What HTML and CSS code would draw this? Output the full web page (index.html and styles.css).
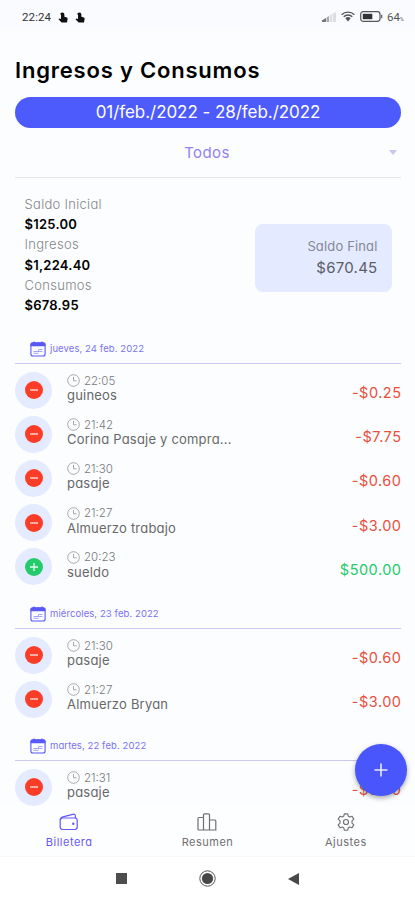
FILE: index.html
```html
<!DOCTYPE html>
<html lang="es">
<head>
<meta charset="utf-8">
<meta name="viewport" content="width=device-width, initial-scale=1">
<title>Ingresos y Consumos</title>
<link rel="stylesheet" href="styles.css">
</head>
<body>
<svg width="0" height="0" class="defs" aria-hidden="true">
  <symbol id="touch" viewBox="0 0 10 12"><path d="M2.2 3.6a2.1 2.1 0 1 1 4.2 0v2.1l2.5.9c.6.2.8.7.7 1.3L9 11.500H3.600L.5 8.300l.8-.8 1.700.6V3.600z" fill="currentColor"/></symbol>
  <symbol id="calendar" viewBox="0 0 16 16"><rect x=".9" y="1.800" width="14.200" height="13.200" rx="2" fill="none" stroke="currentColor" stroke-width="1.100"/><path d="M.5 5.200V3.500a2 2 0 0 1 2-2h1V.6h1.200v.9h6.600V.6h1.200v.9h1a2 2 0 0 1 2 2v1.700z" fill="currentColor"/><path d="M9 8.500h3.500M3.500 10.500h9M3.500 12.300h5M8.500 8.500v1.500" stroke="currentColor" stroke-width=".9" opacity=".6"/></symbol>
  <symbol id="clock" viewBox="0 0 13 13"><g fill="none" stroke="currentColor" stroke-width=".85"><circle cx="6.500" cy="6.500" r="5.800"/><path d="M6.500 2.800v4h3.200"/></g></symbol>
  <symbol id="minus" viewBox="0 0 18 18"><circle cx="9" cy="9" r="9" fill="currentColor"/><path d="M5 9h8" stroke="#ffe9e6" stroke-width="1.300"/></symbol>
  <symbol id="plus" viewBox="0 0 18 18"><circle cx="9" cy="9" r="9" fill="currentColor"/><path d="M5 9h8M9 5v8" stroke="#e6fbef" stroke-width="1.300"/></symbol>
</svg>
<div class="app">
  <header class="status">
    <span class="status-time">22:24</span>
    <svg class="touch"><use href="#touch"/></svg>
    <svg class="touch"><use href="#touch"/></svg>
    <div class="status-right">
      <svg width="14" height="10" viewBox="0 0 14 10"><path d="M0 10V8.200L4 6v4z" fill="#777"/><path d="M4.500 10V5.500L7 4v6z" fill="#aaa"/><path d="M7.700 10V3.500L10 2v8zM10.700 10V1.500L14 0v10z" fill="#dcdee0"/></svg>
      <svg width="14" height="11" viewBox="0 0 14 11"><g fill="none" stroke="#555" stroke-width="1.300"><path d="M.6 3.700a9 9 0 0 1 12.800 0M2.700 5.800a6 6 0 0 1 8.600 0"/></g><path d="M4.300 7.300a4 4 0 0 1 5.400 0L7 10.500z" fill="#555"/></svg>
      <svg width="23" height="11" viewBox="0 0 23 11"><rect x=".7" y=".7" width="19.300" height="9.600" rx="2.500" fill="none" stroke="#555" stroke-width="1.200"/><rect x="2.800" y="2.800" width="9.500" height="5.400" fill="#333"/><path d="M21.700 3.800v3.400" stroke="#666" stroke-width="1.300"/></svg>
      <span class="battery">64<small>%</small></span>
    </div>
  </header>

  <main class="content">
    <h1>Ingresos y Consumos</h1>
    <div class="range"><span>01/feb./2022 - 28/feb./2022</span></div>
    <div class="filter"><span>Todos</span><i class="caret"></i></div>

    <section class="summary">
      <dl>
        <dt>Saldo Inicial</dt><dd>$125.00</dd>
        <dt>Ingresos</dt><dd>$1,224.40</dd>
        <dt>Consumos</dt><dd>$678.95</dd>
      </dl>
      <div class="balance">
        <span class="balance-label">Saldo Final</span>
        <span class="balance-value">$670.45</span>
      </div>
    </section>

    <section class="day">
      <h2><svg class="cal"><use href="#calendar"/></svg><span>jueves, 24 feb. 2022</span></h2>
      <ul>
        <li><span class="badge out"><svg><use href="#minus"/></svg></span><div class="info"><time><svg><use href="#clock"/></svg>22:05</time><p>guineos</p></div><b class="out">-$0.25</b></li>
        <li><span class="badge out"><svg><use href="#minus"/></svg></span><div class="info"><time><svg><use href="#clock"/></svg>21:42</time><p>Corina Pasaje y compra...</p></div><b class="out">-$7.75</b></li>
        <li><span class="badge out"><svg><use href="#minus"/></svg></span><div class="info"><time><svg><use href="#clock"/></svg>21:30</time><p>pasaje</p></div><b class="out">-$0.60</b></li>
        <li><span class="badge out"><svg><use href="#minus"/></svg></span><div class="info"><time><svg><use href="#clock"/></svg>21:27</time><p>Almuerzo trabajo</p></div><b class="out">-$3.00</b></li>
        <li><span class="badge in"><svg><use href="#plus"/></svg></span><div class="info"><time><svg><use href="#clock"/></svg>20:23</time><p>sueldo</p></div><b class="in">$500.00</b></li>
      </ul>
    </section>
    <section class="day">
      <h2><svg class="cal"><use href="#calendar"/></svg><span>miércoles, 23 feb. 2022</span></h2>
      <ul>
        <li><span class="badge out"><svg><use href="#minus"/></svg></span><div class="info"><time><svg><use href="#clock"/></svg>21:30</time><p>pasaje</p></div><b class="out">-$0.60</b></li>
        <li><span class="badge out"><svg><use href="#minus"/></svg></span><div class="info"><time><svg><use href="#clock"/></svg>21:27</time><p>Almuerzo Bryan</p></div><b class="out">-$3.00</b></li>
      </ul>
    </section>
    <section class="day">
      <h2><svg class="cal"><use href="#calendar"/></svg><span>martes, 22 feb. 2022</span></h2>
      <ul>
        <li><span class="badge out"><svg><use href="#minus"/></svg></span><div class="info"><time><svg><use href="#clock"/></svg>21:31</time><p>pasaje</p></div><b class="out">-$0.60</b></li>
      </ul>
    </section>
  </main>

  <button class="fab" aria-label="Agregar"><svg width="16" height="16" viewBox="0 0 16 16"><path d="M8 1.500v13M1.500 8h13" stroke="#e8eaff" stroke-width="1.600"/></svg></button>

  <nav class="tabs">
    <a class="tab active"><svg width="20" height="18" viewBox="0 0 20 18"><g fill="none" stroke="currentColor" stroke-width="1.200"><rect x="1.200" y="5" width="17" height="11.500" rx="2.400"/><path d="M1.300 7.300C1.300 5 2 4.300 4 3.800l9.700-2.500c1.800-.4 2.700.3 2.700 1.900V5"/></g><circle cx="14.300" cy="10.700" r="1.200" fill="currentColor"/></svg><span>Billetera</span></a>
    <a class="tab"><svg width="20" height="18" viewBox="0 0 20 18"><path d="M1 17V5.500q0-1 1-1h4.500V17M6.500 17V1.800q0-1 1-1h4q1 0 1 1V17M12.500 7h5.300q1 0 1 1v9H1" fill="none" stroke="currentColor" stroke-width="1.200"/></svg><span>Resumen</span></a>
    <a class="tab"><svg width="18" height="18" viewBox="0 0 18 18"><g fill="none" stroke="currentColor" stroke-width="1.150" stroke-linejoin="round"><path d="M7.300.8h3.400l.5 2.300 1.500.9 2.300-.8 1.800 2.900-1.800 1.700v2.400l1.800 1.700-1.800 2.900-2.300-.8-1.500.9-.5 2.300H7.300l-.5-2.300-1.500-.9-2.300.8-1.800-2.900L3 10.200V7.800L1.200 6.100 3 3.200l2.300.8 1.500-.9z"/><circle cx="9" cy="9" r="2.500"/></g></svg><span>Ajustes</span></a>
  </nav>
  <footer class="system">
    <svg width="11" height="11"><rect width="11" height="11" fill="#4d4d4d"/></svg>
    <svg width="17" height="17" viewBox="0 0 17 17"><circle cx="8.500" cy="8.500" r="7.700" fill="none" stroke="#555" stroke-width="1"/><circle cx="8.500" cy="8.500" r="5.600" fill="#484848"/></svg>
    <svg width="11" height="12" viewBox="0 0 11 12"><path d="M11 0v12L0 6z" fill="#484848"/></svg>
  </footer>
</div>
</body>
</html>
```

FILE: styles.css
```css
* { box-sizing: border-box; margin: 0; padding: 0; }
body {
  font-family: Inter, "Open Sans", sans-serif;
  font-feature-settings: "cv11";
  background: #fbfdff;
  color: #000;
}
.defs { position: absolute; }
svg { display: block; flex: none; }
.app { position: relative; height: 900px; display: flex; flex-direction: column; overflow: hidden; }

.status { flex: none; height: 28px; padding: 5px 10px 0 22px; display: flex; align-items: center; background: #f9fbfe; color: #333; }
.status-time { width: 36px; font: 11.5px Roboto, sans-serif; letter-spacing: .1px; }
.touch { width: 10px; height: 12px; margin-right: 6.500px; color: #111; }
.status-right { margin-left: auto; display: flex; align-items: center; gap: 5px; }
.battery { width: 18px; font: 11.5px Roboto, sans-serif; color: #555; white-space: nowrap; margin-left: -1px; }
.battery small { font-size: 5px; }

.content { flex: 1; min-height: 0; overflow: hidden; padding: 0 14px 0 15px; }
h1 { margin-top: 25px; height: 34px; line-height: 34px; font-size: 22px; font-weight: 600; letter-spacing: .8px; white-space: nowrap; }
.range { margin-top: 9.500px; height: 31.500px; border-radius: 16px; background: #4d5bfd; color: #fff; display: flex; align-items: center; justify-content: center; font-size: 17px; letter-spacing: -.05px; white-space: nowrap; }
.filter { position: relative; height: 50px; border-bottom: 1px solid #e3e6ea; display: flex; align-items: center; justify-content: center; color: #9183ee; font-size: 15px; letter-spacing: .4px; }
.filter span { margin-right: 2px; }
.caret { position: absolute; right: 4px; top: 22px; border: 4.500px solid transparent; border-top: 5px solid #c8c7ee; border-bottom: 0; }

.summary { height: 146px; padding: 16px 9px 0 9.500px; display: flex; justify-content: space-between; }
dt, dd { height: 20.200px; line-height: 20.200px; font-size: 13px; white-space: nowrap; }
dt { color: #868686; font-weight: 300; letter-spacing: .3px; }
dd { font-weight: 600; letter-spacing: .25px; }
.balance { margin-top: 30px; width: 137px; height: 68px; border-radius: 8px; background: #e4eaff; padding: 11px 14.500px; text-align: right; display: flex; flex-direction: column; }
.balance-label { height: 22px; line-height: 22px; font-size: 13px; letter-spacing: .15px; color: #858892; white-space: nowrap; }
.balance-value { height: 21px; line-height: 21px; font-size: 15px; letter-spacing: .25px; color: #5a5d66; }

.day h2 { height: 40px; padding: 17px 0 0 15px; border-bottom: 1px solid #cbc6f2; display: flex; align-items: flex-start; gap: 4px; font-weight: 400; color: #7a72ee; }
.cal { width: 16px; height: 16px; color: #5858f5; }
.day h2 span { font-size: 9.500px; line-height: 16px; letter-spacing: .09px; white-space: nowrap; }
.day ul { list-style: none; padding-top: 4px; }
.day li { height: 44.200px; display: flex; align-items: center; }
.badge { width: 37px; height: 37px; border-radius: 50%; background: #e5ebff; display: flex; align-items: center; justify-content: center; flex: none; }
.badge svg { width: 18px; height: 18px; }
.out { color: #fb3d28; }
.in { color: #24ca6c; }
.info { flex: 1; margin-left: 15px; padding-bottom: 4px; }
time { display: flex; align-items: center; gap: 4px; height: 15px; font-size: 11.500px; font-weight: 300; color: #777; }
time svg { width: 13px; height: 13px; color: #999; }
.info p { height: 15px; line-height: 15px; font-size: 13px; letter-spacing: .2px; color: #686868; white-space: nowrap; }
.day b { font-size: 14.500px; font-weight: 400; letter-spacing: .5px; margin-right: -.5px; padding-top: 5px; }
.day b.out { color: #e8503d; }

.fab { position: absolute; left: 354.500px; top: 744px; width: 52px; height: 52px; border: 0; border-radius: 50%; background: #4856fb; box-shadow: 0 2px 5px rgba(0,0,0,.35); display: flex; align-items: center; justify-content: center; }
.tabs { flex: none; height: 51px; background: #fdfeff; border-bottom: 1px solid #f7f8fa; display: grid; grid-template-columns: repeat(3, 1fr); }
.tab { display: flex; flex-direction: column; align-items: center; padding-top: 7px; color: #6f6f6f; }
.tab span { margin-top: 3px; font-size: 11px; line-height: 16px; letter-spacing: .5px; }
.tab.active { color: #6558f2; }
.system { flex: none; height: 43px; background: #fff; display: flex; justify-content: center; align-items: center; gap: 72px; }
```
